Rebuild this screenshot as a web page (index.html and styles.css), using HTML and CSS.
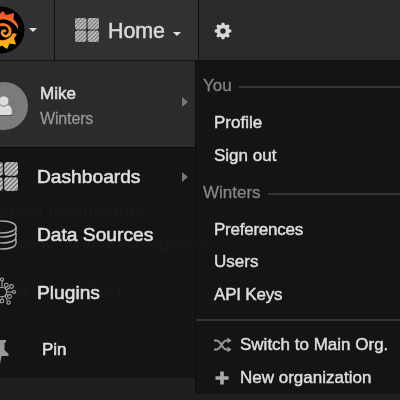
FILE: index.html
```html
<!DOCTYPE html>
<html lang="en">
<head>
<meta charset="utf-8">
<title>Home</title>
<link rel="stylesheet" href="styles.css">
</head>
<body>
<svg class="defs" width="0" height="0">
  <defs>
    <pattern id="hatch" width="2.7" height="2.7" patternUnits="userSpaceOnUse" patternTransform="rotate(45)">
      <rect width="2.7" height="2.7" fill="#747474"/><rect width="1.4" height="2.7" fill="#c8c8c8"/>
    </pattern>
    <linearGradient id="flame" gradientUnits="userSpaceOnUse" x1="0" y1="-19" x2="0" y2="19"><stop offset="0" stop-color="#f04e28"/><stop offset=".55" stop-color="#f58a24"/><stop offset="1" stop-color="#fdc70c"/></linearGradient>
    <symbol id="tiles" viewBox="0 0 24 24"><g fill="url(#hatch)"><rect width="11.4" height="11.4" rx="2"/><rect x="12.6" width="11.4" height="11.4" rx="2"/><rect y="12.6" width="11.4" height="11.4" rx="2"/><rect x="12.6" y="12.6" width="11.4" height="11.4" rx="2"/></g></symbol>
  </defs>
</svg>
<header class="navbar">
  <div class="brand">
    <svg class="logo" width="48" height="48" viewBox="-24 -24 48 48">
      <circle r="23.500" fill="#000"/>
      <path fill="url(#flame)" d="M-4-14 2-19 5-15 13-17 12.500-10.500Q18-6 17-1Q13-8 6-10Q0-12-6-8L-14-4Z"/>
      <path fill="url(#flame)" d="M16 4 13 8.500 15 14.500 8.500 13.500 6 19 1 15.500-6 19-9 12-9 7Q-2 11 3 10Q9 9 12 3Z"/>
      <path fill="none" stroke="url(#flame)" stroke-width="2.800" stroke-linecap="round" d="M-6 1C-5-8 8-7 9 0C10 7 2 8 1 3C1 1 3 0 4 1"/>
    </svg>
    <span class="caret"></span>
  </div>
  <div class="home"><svg width="24" height="24"><use href="#tiles"/></svg><span class="home-label">Home</span><span class="caret"></span></div>
  <div class="settings">
    <svg width="18" height="18" viewBox="-9 -9 18 18"><g fill="#d8d8d8"><path fill-rule="evenodd" d="M0-6.400A6.400 6.400 0 1 0 0 6.400A6.400 6.400 0 1 0 0-6.400M0-2.800A2.800 2.800 0 1 1 0 2.800A2.800 2.800 0 1 1 0-2.800"/><path id="tooth" d="M-1.900-5.500-1.300-8.300H1.300L1.900-5.500Z"/><use href="#tooth" transform="rotate(45)"/><use href="#tooth" transform="rotate(90)"/><use href="#tooth" transform="rotate(135)"/><use href="#tooth" transform="rotate(180)"/><use href="#tooth" transform="rotate(225)"/><use href="#tooth" transform="rotate(270)"/><use href="#tooth" transform="rotate(315)"/></g></svg>
  </div>
</header>
<main class="menus">
  <nav class="sidebar">
    <div class="user">
      <svg class="avatar" width="48" height="48" viewBox="0 0 48 48"><circle cx="24" cy="24" r="24" fill="#7b7b7b"/><path fill="#555" d="M15 34v-4q0-5 5-5h7q5 0 5 5v4Z"/><path fill="#dcdcdc" d="M15 31q0-8 5-8h7q5 0 5 8 0 2-2 2H17q-2 0-2-2Z"/><circle cx="23.800" cy="19" r="5.200" fill="#dcdcdc" stroke="#7b7b7b"/></svg>
      <div class="names"><strong class="name">Mike</strong><span class="org">Winters</span></div>
      <span class="arrow"></span>
    </div>
    <div class="item"><svg class="icon tile-icon" width="29" height="29"><use href="#tiles"/></svg><span class="label dash">Dashboards</span><span class="arrow"></span></div>
    <div class="item"><svg class="icon" width="29" height="30" viewBox="0 0 29 30"><g fill="none" stroke="#aaa" stroke-width="1.400"><ellipse cx="14.500" cy="7" rx="13.500" ry="6"/><path d="M1 7v4c0 8 27 8 27 0V7M1 13v4c0 8 27 8 27 0v-4M1 19v4c0 8 27 8 27 0v-4"/></g></svg><span class="label sources">Data Sources</span></div>
    <div class="item"><svg class="icon plug-icon" width="28" height="28" viewBox="-14 -14 28 28"><g fill="none" stroke="#aaa" stroke-width="1.100"><circle r="4.700"/><path d="M0-5V-11M5 0H10.500M-5 0H-10.500M3.400-3.400 4-5M4.500-2 7.500-4.200M4.500 2.500 6 3.500M3 4 5.500 8.500M0 5V7M-3.500-3.500-7-6M-3.500 3.500-7 7"/><circle cy="-12.500" r="1.500"/><circle cx="12" r="1.500"/><circle cx="-12" r="1.500"/><circle cx="4.300" cy="-6.800" r="1.900"/><circle cx="9.500" cy="-5.500" r="1.900"/><circle cx="7.500" cy="4.500" r="1.900"/><circle cx="6.500" cy="10.500" r="1.700"/><circle cy="9" r="1.800"/><circle cx="-8" cy="-7" r="1.700"/><circle cx="-8" cy="8" r="1.700"/></g></svg><span class="label plugins">Plugins</span></div>
    <div class="item"><svg class="icon pin-icon" width="19" height="24" viewBox="0 0 19 24"><path fill="#999" d="M3 0H16V2L14.500 3V10L18.500 14V16H11.500L10 24H9L7.500 16H.5V14L4.500 10V3L3 2Z"/></svg><span class="label pin">Pin</span></div>
  </nav>
  <nav class="submenu">
    <div class="heading you"><span>You</span></div>
    <a class="link profile">Profile</a>
    <a class="link signout">Sign out</a>
    <div class="heading winters"><span>Winters</span></div>
    <a class="link prefs">Preferences</a>
    <a class="link users">Users</a>
    <a class="link keys">API Keys</a>
    <div class="divider"></div>
    <a class="link action switch"><svg width="18" height="16" viewBox="0 0 18 16"><path fill="none" stroke="#999" stroke-width="2" d="M0 3.500H2.500C7 3.500 8 12.500 12.500 12.500H15M0 12.500H2.500C7 12.500 8 3.500 12.500 3.500H15"/><path fill="#999" d="M13.500.5 17.500 3.500 13.500 6.500ZM13.500 9.500 17.500 12.500 13.500 15.500Z"/></svg><span>Switch to Main Org.</span></a>
    <a class="link action neworg"><svg width="18" height="16" viewBox="0 0 18 16"><path fill="#aaa" d="M6.200 1.500h3.600V6.200h4.700v3.600H9.800v4.700H6.200V9.800H1.500V6.200h4.700Z"/></svg><span>New organization</span></a>
  </nav>
  <div class="ghost starred">arred dashboards</div>
  <div class="ghost recent">ently viewed dashboards</div>
  <div class="ghost demo">SCHEMA DEMO</div>
</main>
</body>
</html>
```
FILE: styles.css
```css
* { box-sizing: border-box; }
body {
  margin: 0;
  width: 400px;
  height: 400px;
  overflow: hidden;
  background: #201d1f;
  color: #dedede;
  font-family: "Liberation Sans", Arial, sans-serif;
  white-space: nowrap;
}
svg { display: block; flex: none; overflow: visible; }
.defs { position: absolute; }
.navbar {
  display: flex;
  height: 61px;
  background: #2a2a2a;
  border-bottom: 1px solid #151515;
}
.brand, .home { display: flex; align-items: center; background: #313131; border-right: 1px solid #101010; }
.brand { width: 55px; }
.logo { margin-left: -23px; }
.brand .caret { margin-left: 4px; }
.home { width: 144px; padding-left: 20px; }
.home-label { margin: 3px 0 0 9px; font-size: 21.5px; width: 57px; color: #d8d8d8; -webkit-text-stroke: .5px; letter-spacing: -.1px; }
.home .caret { margin: 7px 0 0 8px; }
.caret { border: 4px solid transparent; border-top: 4px solid #e0e0e0; border-bottom: 0; }
.settings { display: flex; align-items: center; padding: 1px 0 0 15px; }
.menus { position: relative; display: flex; align-items: flex-start; height: 339px; }
.sidebar { width: 195px; height: 317px; background: #141414; }
.user { display: flex; align-items: center; width: 195px; height: 87px; background: #2b2b2b; border-bottom: 1px solid #0b0b0b; }
.avatar { margin: 3px 0 0 -20px; }
.names { display: flex; flex-direction: column; width: 142px; margin: 4px 0 0 12px; }
.name { font-size: 17px; font-weight: 400; line-height: 24px; -webkit-text-stroke: .6px; }
.org { font-size: 16px; line-height: 25px; color: #969696; -webkit-text-stroke: .3px; letter-spacing: -.15px; }
.user .arrow { margin-bottom: 4px; }
.arrow { border: 5px solid transparent; border-left: 6px solid #777; border-right: 0; }
.item { display: flex; align-items: center; height: 57.7px; }
.icon { margin-left: -12px; }
.tile-icon { margin-left: -11px; }
.label { font-size: 19.2px; margin: 1px 0 0 20px; width: 125px; -webkit-text-stroke: .6px; }
.tile-icon + .label { margin-left: 19px; }
.item .arrow { margin-left: 20px; }
.plugins { margin-left: 21px; }
.pin-icon { margin: 5px 0 0 -10px; }
.pin { font-size: 17px; margin-left: 33px; }
.submenu { display: flex; flex-direction: column; width: 205px; height: 333px; background: #141414; border-left: 1px solid #0e0e0e; padding-top: 11px; }
.heading { display: flex; align-items: center; height: 28px; padding-left: 7px; color: #858585; font-size: 17px; -webkit-text-stroke: .3px; }
.heading::after { content: ""; flex: 1; height: 2px; margin: 2px 0 0 7px; background: #353535; }
.you { margin-bottom: 7px; }
.winters { margin: 7px 0 7px; }
.link { display: flex; align-items: center; height: 32.5px; padding-left: 18px; font-size: 17px; -webkit-text-stroke: .45px; }
.prefs { letter-spacing: -.25px; }
.keys { letter-spacing: -.2px; }
.divider { height: 2px; margin: 8px 0 8px; background: #333; flex: none; }
.action svg { margin-right: 8px; }
.ghost { position: absolute; color: #191919; font-size: 17px; pointer-events: none; mix-blend-mode: lighten; }
.starred { left: 0; top: 140px; letter-spacing: .7px; }
.recent { left: 17px; top: 175px; letter-spacing: .4px; }
.demo { left: 16px; top: 221px; letter-spacing: -2.2px; }
```
